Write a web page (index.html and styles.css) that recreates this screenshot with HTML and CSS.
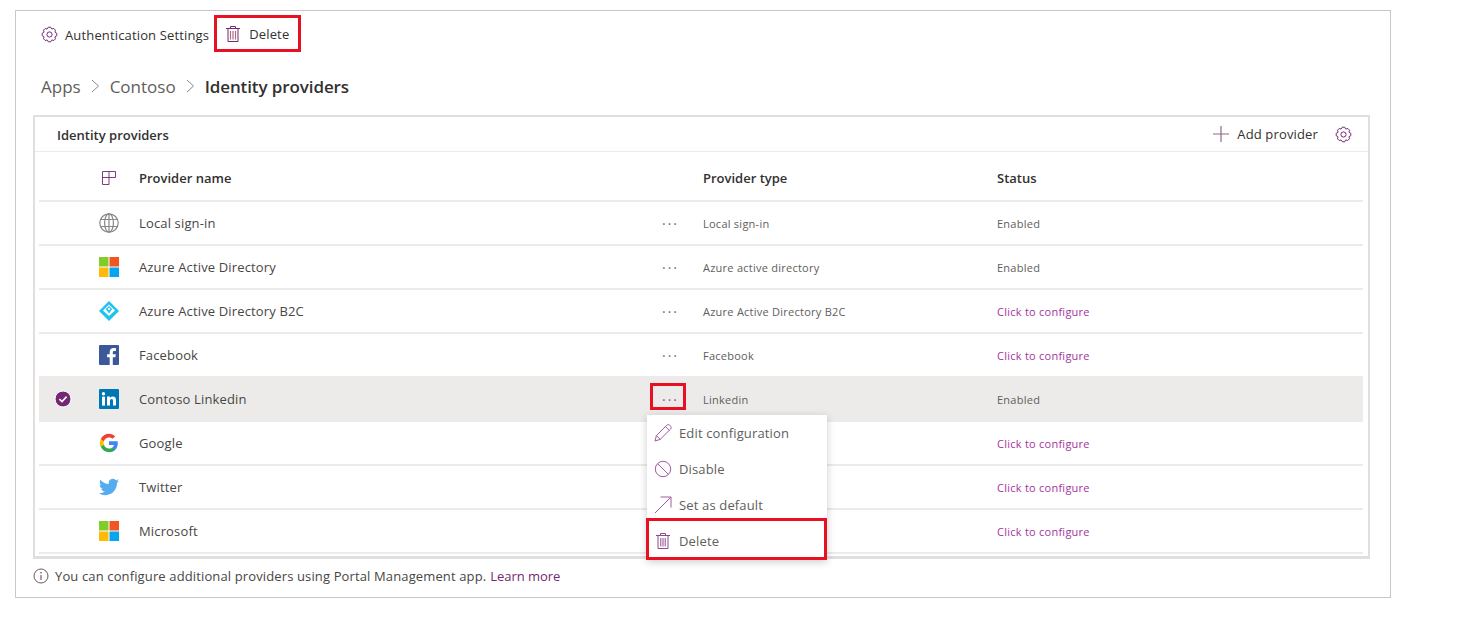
FILE: index.html

```html
<!DOCTYPE html>
<html lang="en">
  <head>
    <meta charset="UTF-8" />
    <title>Identity providers</title>
    <link rel="stylesheet" href="styles.css">
  </head>
  <body>
    <svg class="defs" width="0" height="0">
      <symbol id="gear" viewBox="0 0 17 17">
        <path fill="none" stroke="#742774" d="M6.4 2.9 7.3 1.2H9.7L10.6 2.9 10.97 3.06 12.81 2.49 14.51 4.19 13.94 6.03 14.1 6.4 15.8 7.3V9.7L14.1 10.6 13.94 10.97 14.51 12.81 12.81 14.51 10.97 13.94 10.6 14.1 9.7 15.8H7.3L6.4 14.1 6.03 13.94 4.19 14.51 2.49 12.81 3.06 10.97 2.9 10.6 1.2 9.7V7.3L2.9 6.4 3.06 6.03 2.49 4.19 4.19 2.49 6.03 3.06Z"/>
        <circle cx="8.5" cy="8.5" r="2.6" fill="none" stroke="#742774"/>
      </symbol>
      <symbol id="trash" viewBox="0 0 16 18">
        <path fill="none" stroke="#742774" d="M1 3.5H15M3 3.5V16.5H13V3.5M5.5 3.5V1.5H10.5V3.5"/>
        <path fill="none" stroke="#a4737f" stroke-width="1.2" d="M5.5 6V14.5M8 6V14.5M10.5 6V14.5"/>
      </symbol>
      <symbol id="windows" viewBox="0 0 20 20">
        <rect width="9.5" height="9.5" fill="#81cc28"/>
        <rect x="10.5" width="9.5" height="9.5" fill="#f25522"/>
        <rect y="10.5" width="9.5" height="9.5" fill="#ffba08"/>
        <rect x="10.5" y="10.5" width="9.5" height="9.5" fill="#05a6f0"/>
      </symbol>
    </svg>

    <div class="frame">
      <div class="toolbar">
        <button class="tool"><svg class="ico16"><use href="#gear"/></svg>Authentication Settings</button>
        <button class="tool tool-delete"><svg class="ico-trash"><use href="#trash"/></svg>Delete</button>
      </div>

      <nav class="crumbs">
        <span>Apps</span>
        <svg class="sep" viewBox="0 0 9 14"><path d="M1 1l6.5 6L1 13" fill="none" stroke="#8a8886"/></svg>
        <span>Contoso</span>
        <svg class="sep" viewBox="0 0 9 14"><path d="M1 1l6.5 6L1 13" fill="none" stroke="#8a8886"/></svg>
        <strong>Identity providers</strong>
      </nav>

      <section class="card">
        <header class="card-head">
          <h2>Identity providers</h2>
          <button class="add"><svg class="plus" viewBox="0 0 16 16"><path d="M8 0V16M0 8H16" stroke="#8c6a86" stroke-width="1.2"/></svg>Add provider</button>
          <svg class="ico16 head-gear"><use href="#gear"/></svg>
        </header>

        <div class="table">
          <div class="row row-head">
            <span></span>
            <svg class="col-ico" viewBox="0 0 14 14"><path d="M.5.5H13.5V6.5H7V13.5H.5ZM.5 6.5H7M7 .5V6.5" fill="none" stroke="#742774" stroke-width=".9"/></svg>
            <span>Provider name</span>
            <span></span>
            <span>Provider type</span>
            <span>Status</span>
          </div>

          <div class="row">
            <span></span>
            <svg class="logo" viewBox="0 0 20 20"><g fill="none" stroke="#8a8886" stroke-width="1.2"><circle cx="10" cy="10" r="9.2"/><ellipse cx="10" cy="10" rx="4.4" ry="9.2"/><path d="M10 .8V19.2M1.6 6.5H18.4M1.6 13.5H18.4"/></g></svg>
            <span class="name">Local sign-in</span>
            <span class="dots">···</span>
            <span class="cell">Local sign-in</span>
            <span class="cell">Enabled</span>
          </div>

          <div class="row">
            <span></span>
            <svg class="logo"><use href="#windows"/></svg>
            <span class="name">Azure Active Directory</span>
            <span class="dots">···</span>
            <span class="cell">Azure active directory</span>
            <span class="cell">Enabled</span>
          </div>

          <div class="row">
            <span></span>
            <svg class="logo" viewBox="0 0 20 20"><path d="M10 0 20 10 10 20 0 10Z" fill="#1fc3f0"/><path d="M10 3.4 16 9.6 10 15 4 9.6Z" fill="#fff"/><path d="M6.8 8 10 4.9 13.2 8 10 12.6Z" fill="#1fc3f0"/><circle cx="10" cy="8" r="1.2" fill="#fff"/></svg>
            <span class="name">Azure Active Directory B2C</span>
            <span class="dots">···</span>
            <span class="cell">Azure Active Directory B2C</span>
            <a class="cell config">Click to configure</a>
          </div>

          <div class="row">
            <span></span>
            <svg class="logo" viewBox="0 0 20 20"><rect width="20" height="20" rx="1" fill="#3b5998"/><path d="M13.8 20V12.3H16.4L16.8 9.3H13.8V7.4C13.8 6.5 14 5.9 15.3 5.9H16.9V3.2C16.6 3.2 15.7 3.1 14.6 3.1 12.3 3.1 10.7 4.5 10.7 7.1V9.3H8.1V12.3H10.7V20Z" fill="#fff"/></svg>
            <span class="name">Facebook</span>
            <span class="dots">···</span>
            <span class="cell">Facebook</span>
            <a class="cell config">Click to configure</a>
          </div>

          <div class="row row-selected">
            <span class="check"><svg viewBox="0 0 18 18"><circle cx="9" cy="9" r="8" fill="#742774" stroke="#fff" stroke-width="1"/><path d="M5.4 9.2 8 11.6 12.6 6.6" fill="none" stroke="#fff" stroke-width="1.6"/></svg></span>
            <svg class="logo" viewBox="0 0 20 20"><rect width="20" height="20" rx="1" fill="#0077b5"/><g fill="#fff"><rect x="3" y="7.6" width="3" height="9"/><circle cx="4.5" cy="4.8" r="1.7"/><path d="M8 7.6H10.9V8.9C11.4 8 12.4 7.4 13.7 7.4 16.3 7.4 17 9 17 11.4V16.6H14V12C14 10.8 13.7 10 12.7 10 11.6 10 11 10.8 11 12V16.6H8Z"/></g></svg>
            <span class="name">Contoso Linkedin</span>
            <span class="dots dots-open">···
              <div class="menu">
                <div class="menu-item"><svg class="menu-ico" viewBox="0 0 18 18"><path d="M1 17 2.4 11.6 12.8 1.2C13.6.4 15 .4 16.2 1.6 17.4 2.8 17.4 4.2 16.6 5L6.2 15.4ZM2.4 11.6 6.2 15.4M11.4 2.6 15.2 6.4" fill="none" stroke="#a05ca0"/></svg>Edit configuration</div>
                <div class="menu-item"><svg class="menu-ico" viewBox="0 0 18 18"><circle cx="9" cy="9" r="7.7" fill="none" stroke="#a05ca0"/><path d="M3.6 3.6 14.4 14.4" stroke="#a05ca0"/></svg>Disable</div>
                <div class="menu-item"><svg class="menu-ico" viewBox="0 0 18 18"><path d="M1 17 17 1M6.5 1H17V11.5" fill="none" stroke="#a05ca0"/></svg>Set as default</div>
                <div class="menu-item menu-delete"><svg class="menu-ico" viewBox="0 0 16 18"><path d="M1 3.5H15M3 3.5V16.5H13V3.5M5.5 3.5V1.5H10.5V3.5M5.8 6V14.5M8 6V14.5M10.2 6V14.5" fill="none" stroke="#8f4a8f"/></svg>Delete</div>
              </div>
            </span>
            <span class="cell">Linkedin</span>
            <span class="cell">Enabled</span>
          </div>

          <div class="row">
            <span></span>
            <svg class="logo" viewBox="0 0 24 24"><path fill="#4285F4" d="M22.56 12.25c0-.78-.07-1.53-.2-2.25H12v4.26h5.92c-.26 1.37-1.04 2.53-2.21 3.31v2.77h3.57c2.08-1.92 3.28-4.74 3.28-8.09z"/><path fill="#34A853" d="M12 23c2.97 0 5.46-.98 7.28-2.66l-3.57-2.77c-.98.66-2.23 1.06-3.71 1.06-2.86 0-5.29-1.93-6.16-4.53H2.18v2.84C3.99 20.53 7.7 23 12 23z"/><path fill="#FBBC05" d="M5.84 14.09c-.22-.66-.35-1.36-.35-2.09s.13-1.43.35-2.09V7.07H2.18C1.43 8.55 1 10.22 1 12s.43 3.45 1.18 4.93l3.66-2.84z"/><path fill="#EA4335" d="M12 5.38c1.62 0 3.06.56 4.21 1.64l3.15-3.15C17.45 2.09 14.97 1 12 1 7.7 1 3.99 3.47 2.18 7.07l3.66 2.84c.87-2.6 3.3-4.53 6.16-4.53z"/></svg>
            <span class="name">Google</span>
            <span></span>
            <span></span>
            <a class="cell config">Click to configure</a>
          </div>

          <div class="row">
            <span></span>
            <svg class="logo" viewBox="0 0 24 24"><path fill="#55acee" d="M23.953 4.57a10 10 0 01-2.825.775 4.958 4.958 0 002.163-2.723c-.951.555-2.005.959-3.127 1.184a4.92 4.92 0 00-8.384 4.482C7.69 8.095 4.067 6.13 1.64 3.162a4.822 4.822 0 00-.666 2.475c0 1.71.87 3.213 2.188 4.096a4.904 4.904 0 01-2.228-.616v.06a4.923 4.923 0 003.946 4.827 4.996 4.996 0 01-2.212.085 4.936 4.936 0 004.604 3.417 9.867 9.867 0 01-6.102 2.105c-.39 0-.779-.023-1.17-.067a13.995 13.995 0 007.557 2.209c9.053 0 13.998-7.496 13.998-13.985 0-.21 0-.42-.015-.63A9.935 9.935 0 0024 4.59z"/></svg>
            <span class="name">Twitter</span>
            <span></span>
            <span></span>
            <a class="cell config">Click to configure</a>
          </div>

          <div class="row">
            <span></span>
            <svg class="logo"><use href="#windows"/></svg>
            <span class="name">Microsoft</span>
            <span></span>
            <span></span>
            <a class="cell config">Click to configure</a>
          </div>
        </div>
      </section>

      <p class="note">
        <svg class="info" viewBox="0 0 16 16"><circle cx="8" cy="8" r="7" fill="none" stroke="#605e5c"/><path d="M8 7V12" stroke="#742774"/><circle cx="8" cy="4.8" r=".8" fill="#742774"/></svg>
        <span>You can configure additional providers using Portal Management app.</span>
        <a>Learn more</a>
      </p>
    </div>
  </body>
</html>
```

FILE: styles.css

```css
* { box-sizing: border-box; }
body {
  font-family: "Open Sans", "Noto Sans", sans-serif;
  font-size: 13px;
  letter-spacing: 0.15px;
  color: #323130;
  background: white;
  margin: 0;
  padding: 10px 66px 24px 15px;
}
.defs { position: absolute; }
button {
  font: inherit;
  letter-spacing: inherit;
  color: inherit;
  background: none;
  border: none;
  padding: 0;
  display: flex;
  align-items: center;
}
.frame {
  height: 588px;
  border: 1px solid #c8c8c8;
  padding: 4px 20px 0 17px;
}
.toolbar {
  display: flex;
  align-items: center;
  height: 37px;
}
.tool { height: 37px; padding-top: 2px; }
.ico16 { width: 17px; height: 17px; flex: none; }
.tool .ico16 { margin: 0 7px 0 8px; }
.tool-delete {
  width: 87px;
  margin-left: 5px;
  border: 3px solid #e81123;
  padding: 0 0 0 8px;
}
.ico-trash { width: 16px; height: 18px; margin-right: 8px; }
.crumbs {
  display: flex;
  align-items: center;
  height: 30px;
  margin: 19px 0 14px 8px;
  font-size: 17px;
  letter-spacing: 0;
  color: #605e5c;
}
.crumbs strong { font-weight: 600; color: #323130; letter-spacing: -0.1px; }
.sep { width: 9px; height: 14px; margin: 0 10px; }
.card {
  height: 444px;
  border: 1px solid #e1dfdd;
  border-width: 2px 2px 3px 2px;
}
.card-head {
  display: flex;
  align-items: center;
  height: 35px;
  padding: 1px 16px 0 22px;
  border-bottom: 1px solid #edebe9;
}
.card-head h2 {
  flex: 1;
  margin: 0;
  font-size: 13px;
  font-weight: 600;
  letter-spacing: 0;
}
.add { margin: 0 17px 2px 0; }
.plus { width: 16px; height: 16px; margin-right: 8px; }
.table { padding: 0 5px 0 4px; }
.row {
  display: grid;
  grid-template-columns: 48px 52px 512px 52px 294px 1fr;
  align-items: center;
  height: 44px;
  border-bottom: 2px solid #edebe9;
}
.row-head {
  height: 50px;
  padding-top: 3px;
  font-weight: 600;
  letter-spacing: 0;
}
.row-selected { background: #edebe9; box-shadow: 0 1px 0 white; }
.col-ico { width: 14px; height: 14px; margin-left: 15px; }
.logo { width: 20px; height: 20px; margin-left: 12px; }
.name { color: #484644; }
.cell { font-size: 11px; letter-spacing: 0.25px; color: #605e5c; }
.config { color: #a4339d; }
.check { display: flex; justify-content: center; }
.check svg { width: 18px; height: 18px; }
.dots {
  position: relative;
  padding-left: 11px;
  font-size: 14px;
  letter-spacing: 2px;
  color: #8f5a8f;
}
.dots-open::after {
  content: "";
  position: absolute;
  left: -1px;
  top: -7px;
  width: 30px;
  height: 21px;
  border: 3px solid #e81123;
}
.menu {
  position: absolute;
  z-index: 2;
  left: -4px;
  top: 25px;
  width: 180px;
  background: white;
  box-shadow: 0 2px 8px rgba(0,0,0,0.2);
  letter-spacing: 0.15px;
}
.menu-item {
  display: flex;
  align-items: center;
  height: 36px;
  padding-left: 7px;
  font-size: 13px;
  color: #605e5c;
}
.menu-ico { width: 18px; height: 18px; margin-right: 7px; flex: none; }
.menu-delete {
  height: 42px;
  margin-top: -5px;
  padding: 5px 0 1px 5px;
  margin-left: -1px;
  border: 3px solid #e81123;
}
.note {
  display: flex;
  align-items: center;
  margin: 8px 0 0 0;
  letter-spacing: 0.13px;
  color: #484644;
}
.info { width: 16px; height: 16px; margin-right: 6px; }
.note a { color: #742774; margin-left: 4px; letter-spacing: -0.05px; }
```
